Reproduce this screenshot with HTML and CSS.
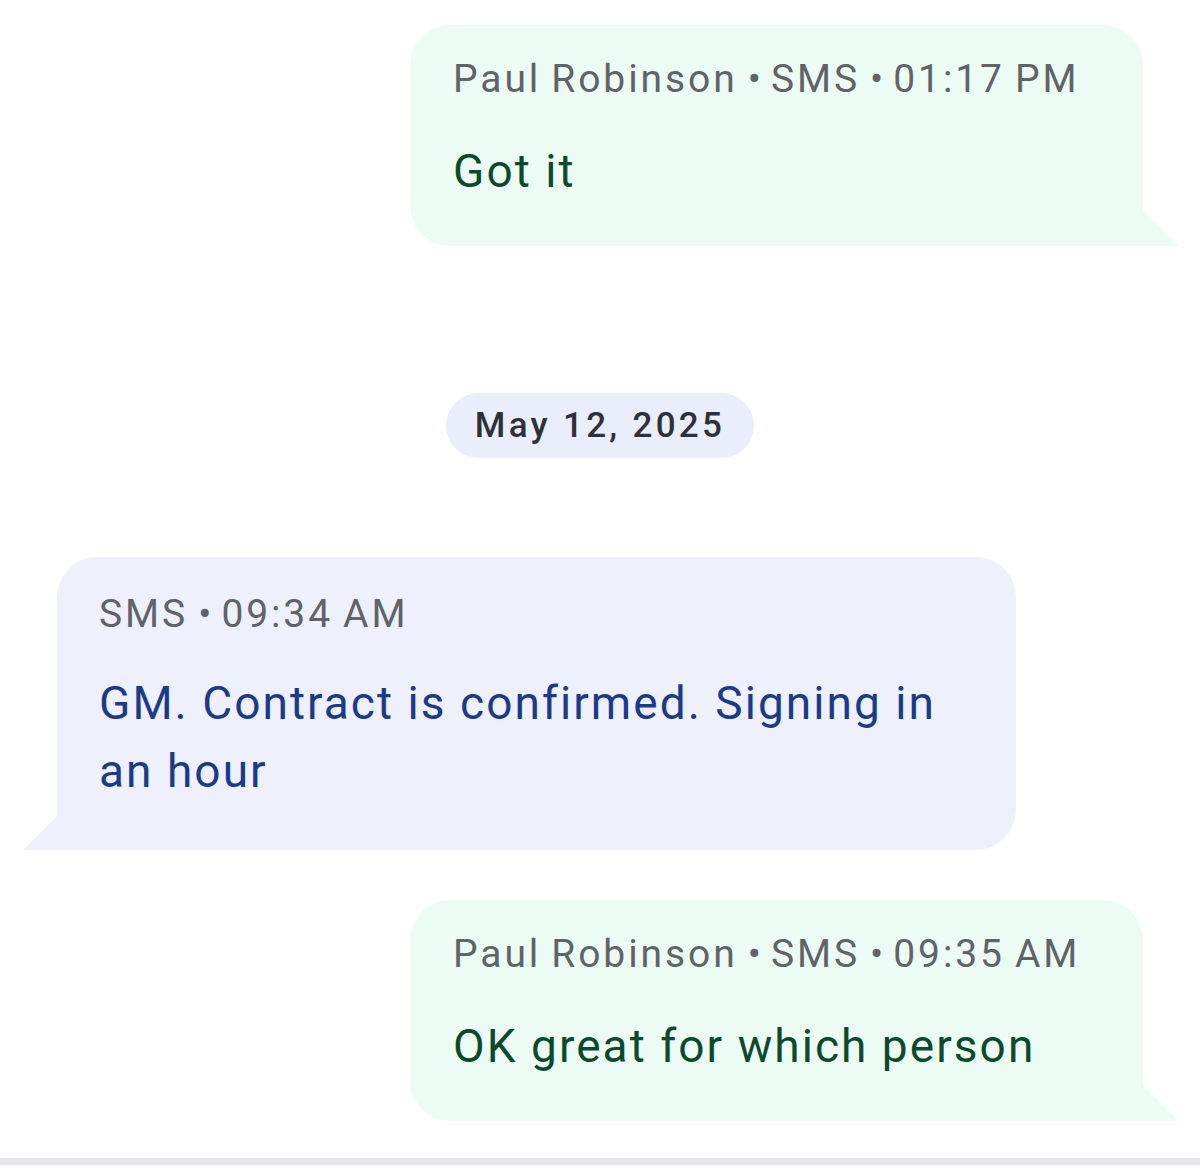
FILE: index.html
```html
<!DOCTYPE html>
<html lang="en">
<head>
    <meta charset="UTF-8">
    <meta name="viewport" content="width=device-width, initial-scale=1.0">
    <title>Conversation</title>
    <link rel="stylesheet" href="styles.css">
</head>
<body>
    <div class="thread">
        <div class="bubble outgoing">
            <div class="meta">Paul Robinson <span class="dot">•</span> SMS <span class="dot">•</span> 01:17 PM</div>
            <div class="text">Got it</div>
        </div>

        <div class="day">
            <span class="day-chip">May 12, 2025</span>
        </div>

        <div class="bubble incoming">
            <div class="meta">SMS <span class="dot">•</span> 09:34 AM</div>
            <div class="text">GM. Contract is confirmed. Signing in an hour</div>
        </div>

        <div class="bubble outgoing">
            <div class="meta">Paul Robinson <span class="dot">•</span> SMS <span class="dot">•</span> 09:35 AM</div>
            <div class="text">OK great for which person</div>
        </div>
    </div>
    <div class="composer-edge"></div>
</body>
</html>
```

FILE: styles.css
```css
body {
    margin: 0;
    background-color: #fff;
    font-family: Roboto, "Noto Sans", Arial, sans-serif;
    height: 1170px;
    overflow: hidden;
    position: relative;
}

.thread {
    display: flex;
    flex-direction: column;
    padding-top: 25px;
}

.bubble {
    position: relative;
    box-sizing: border-box;
    padding: 30px 42px 41px;
}

.bubble.outgoing {
    margin-left: 410px;
    width: 733px;
    background-color: #ecfbf4;
    border-radius: 40px 40px 0 40px;
    padding-left: 43px;
}

.bubble.incoming {
    margin-left: 57px;
    width: 959px;
    background-color: #eef0fc;
    border-radius: 40px 40px 40px 0;
    padding-top: 33px;
    padding-bottom: 45px;
    margin-bottom: 50px;
}

/* little tails at the bottom corner */
.bubble::after {
    content: "";
    position: absolute;
    bottom: 0;
    width: 36px;
    height: 36px;
    background-color: inherit;
}

.bubble.outgoing::after {
    right: -36px;
    clip-path: polygon(0 0, 100% 100%, 0 100%);
}

.bubble.incoming::after {
    left: -34px;
    width: 34px;
    height: 34px;
    clip-path: polygon(100% 0, 100% 100%, 0 100%);
}

.meta {
    font-size: 39px;
    line-height: 48px;
    color: #606367;
    letter-spacing: 2.9px;
    word-spacing: -2.5px;
    white-space: nowrap;
}

.dot {
    letter-spacing: 0;
}

.text {
    margin-top: 34px;
    font-size: 46px;
    line-height: 68px;
    letter-spacing: 2.05px;
}

.outgoing .text {
    color: #0c4a2d;
}

.incoming .text {
    color: #1b3a8a;
    margin-top: 31px;
}

.day {
    display: flex;
    justify-content: center;
    margin: 147px 0 99px;
}

.day-chip {
    display: inline-block;
    height: 65px;
    line-height: 65px;
    padding: 0 29px;
    border-radius: 33px;
    background-color: #e9eefa;
    color: #2e3139;
    font-size: 35px;
    font-weight: 500;
    letter-spacing: 3.3px;
}

.composer-edge {
    position: absolute;
    left: 0;
    right: 0;
    top: 1158px;
    height: 7px;
    background-color: #e6e5ec;
}
```
